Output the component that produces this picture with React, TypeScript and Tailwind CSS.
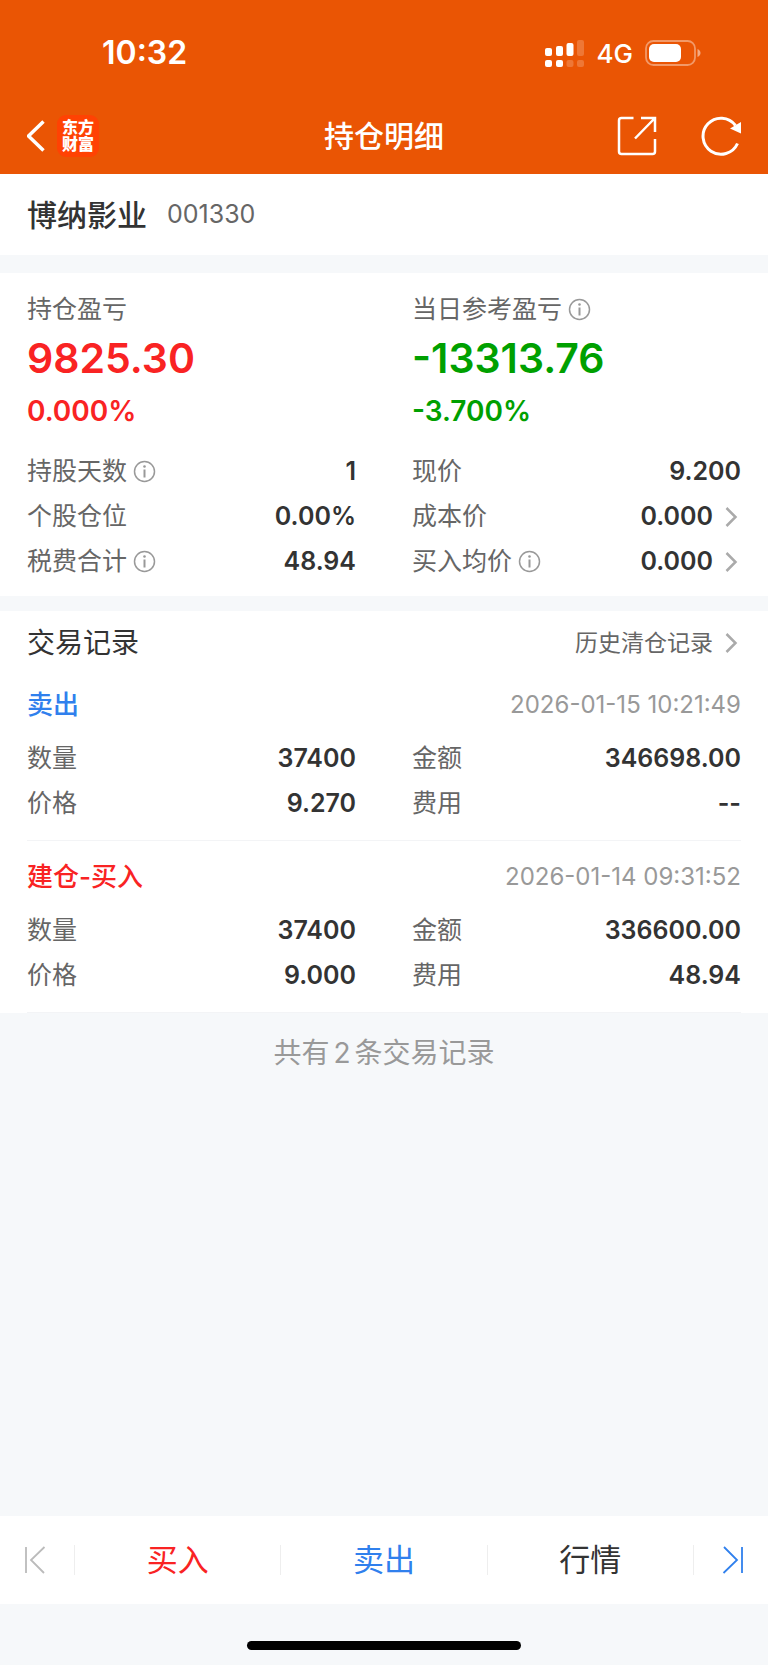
interface Field {
  label: string;
  value: string;
  info?: boolean;
  link?: boolean;
}

interface TradeRecord {
  title: string;
  side: 'buy' | 'sell';
  time: string;
  fields: Field[];
}

const position: Field[] = [
  { label: '持股天数', value: '1', info: true },
  { label: '现价', value: '9.200' },
  { label: '个股仓位', value: '0.00%' },
  { label: '成本价', value: '0.000', link: true },
  { label: '税费合计', value: '48.94', info: true },
  { label: '买入均价', value: '0.000', info: true, link: true },
];

const records: TradeRecord[] = [
  {
    title: '卖出',
    side: 'sell',
    time: '2026-01-15 10:21:49',
    fields: [
      { label: '数量', value: '37400' },
      { label: '金额', value: '346698.00' },
      { label: '价格', value: '9.270' },
      { label: '费用', value: '--' },
    ],
  },
  {
    title: '建仓-买入',
    side: 'buy',
    time: '2026-01-14 09:31:52',
    fields: [
      { label: '数量', value: '37400' },
      { label: '金额', value: '336600.00' },
      { label: '价格', value: '9.000' },
      { label: '费用', value: '48.94' },
    ],
  },
];

export default function App() {
  return (
    <div className="flex min-h-screen flex-col bg-[#f6f8fa] font-['Inter','Noto_Sans_CJK_SC',sans-serif] text-[#333]">
      <header className="bg-[#ea5504] pb-2 text-white">
        <StatusBar />
        <nav className="grid h-[60px] grid-cols-[1fr_auto_1fr] items-center px-[27px]">
          <div className="flex items-center gap-3">
            <button type="button" aria-label="返回">
              <svg className="h-8 w-[18px]" viewBox="0 0 18 32" fill="none" stroke="currentColor" strokeWidth="3.500">
                <path d="M16.500 1.500 1.500 16l15 14.500" />
              </svg>
            </button>
            <a href="#home" className="flex size-[42px] flex-col items-center justify-center rounded-[9px] bg-[#ff4203] text-base leading-[17px] font-black">
              <span>东方</span>
              <span>财富</span>
            </a>
          </div>
          <h1 className="text-3xl font-medium">持仓明细</h1>
          <div className="flex items-center justify-end gap-11">
            <button type="button" aria-label="分享">
              <svg className="size-10" viewBox="0 0 40 40" fill="none" stroke="currentColor" strokeWidth="2.500">
                <path d="M16.500 2H4.500A2.500 2.500 0 0 0 2 4.500v31A2.500 2.500 0 0 0 4.500 38h31a2.500 2.500 0 0 0 2.500-2.500V23" />
                <path d="M24 2h14v14M37.500 2.500 18 22.500" />
              </svg>
            </button>
            <button type="button" aria-label="刷新">
              <svg className="size-10" viewBox="0 0 40 40" fill="none" stroke="currentColor" strokeWidth="3">
                <path d="M36.500 27.500A18 18 0 1 1 34.500 9.500" />
                <path d="M40 6v11.500L29 12.500z" fill="currentColor" stroke="none" />
              </svg>
            </button>
          </div>
        </nav>
      </header>

      <main className="flex-1">
        <section className="flex items-center gap-5 bg-white px-[27px] py-5 leading-[41px]">
          <h2 className="text-3xl font-medium">博纳影业</h2>
          <span className="text-[25px] text-[#666]">001330</span>
        </section>

        {/* 持仓概览 */}
        <section className="mt-[18px] bg-white px-[27px] pt-[18px] pb-3">
          <div className="grid grid-cols-2 gap-x-14">
            <Profit label="持仓盈亏" value="9825.30" percent="0.000%" color="text-[#f92323]" />
            <Profit label="当日参考盈亏" value="-13313.76" percent="-3.700%" color="text-[#00a000]" info />
          </div>
          <div className="mt-4">
            <FieldGrid fields={position} />
          </div>
        </section>

        {/* 交易记录 */}
        <section className="mt-[15px] bg-white px-[27px] pt-1.5">
          <div className="flex items-center justify-between leading-[52px]">
            <h2 className="text-[28px]">交易记录</h2>
            <a href="#history" className="flex items-center gap-3 text-[23px] text-[#666]">
              历史清仓记录
              <Chevron />
            </a>
          </div>
          {records.map(record => (
            <RecordItem key={record.time} record={record} />
          ))}
        </section>

        <p className="text-center text-[28px] leading-[80px] text-[#999]">
          共有<span className="mx-1">{records.length}</span>条交易记录
        </p>
      </main>

      <footer>
        <div className="flex h-[88px] items-center bg-white text-[31px]">
          <button type="button" aria-label="上一只" className="flex w-[74px] justify-center text-[#bbb]">
            <StepIcon />
          </button>
          <button type="button" className="h-[30px] flex-1 border-l border-[#eee] leading-[30px] text-[#f92323]">买入</button>
          <button type="button" className="h-[30px] flex-1 border-l border-[#eee] leading-[30px] text-[#3080ed]">卖出</button>
          <button type="button" className="h-[30px] flex-1 border-x border-[#eee] leading-[30px]">行情</button>
          <button type="button" aria-label="下一只" className="flex w-[74px] rotate-180 justify-center text-[#3080ed]">
            <StepIcon />
          </button>
        </div>
        <div className="flex justify-center pt-[37px] pb-[15px]">
          <div className="h-[9px] w-[274px] rounded-full bg-black"></div>
        </div>
      </footer>
    </div>
  );
}

function StatusBar() {
  return (
    <div className="flex h-[106px] items-center justify-between pr-[67px] pl-[102px]">
      <span className="text-[32px] font-semibold">10:32</span>
      <div className="flex items-center gap-3">
        <svg className="h-[27px] w-10" viewBox="0 0 40 27" fill="currentColor">
          <rect x="0" y="8" width="7" height="8" rx="2" />
          <rect x="11" y="6" width="7" height="10" rx="2" />
          <rect x="21.500" y="3" width="7" height="13" rx="2" />
          <rect x="32" y="0" width="7" height="16" rx="2" opacity="0.2" />
          <rect x="0" y="20" width="7" height="7" rx="2" />
          <rect x="11" y="20" width="7" height="7" rx="2" />
          <rect x="21.500" y="20" width="7" height="7" rx="2" opacity="0.2" />
          <rect x="32" y="20" width="7" height="7" rx="2" opacity="0.2" />
        </svg>
        <span className="text-[26px] font-medium">4G</span>
        <svg className="h-[26px] w-14" viewBox="0 0 56 26" fill="none">
          <rect x="1" y="1" width="49" height="24" rx="7.500" stroke="currentColor" strokeWidth="1.800" opacity="0.4" />
          <rect x="4" y="4" width="32" height="18" rx="5" fill="currentColor" />
          <path d="M52.500 9c4 1.500 4 6.500 0 8z" fill="currentColor" opacity="0.5" />
        </svg>
      </div>
    </div>
  );
}

function Profit({ label, value, percent, color, info }: { label: string; value: string; percent: string; color: string; info?: boolean }) {
  return (
    <div>
      <p className="flex items-center gap-1.5 text-[25px] leading-9 text-[#666]">
        {label}
        {info && <InfoButton label={label} />}
      </p>
      <p className={`text-[41px] leading-[62px] font-semibold ${color}`}>{value}</p>
      <p className={`text-[28px] leading-[44px] font-semibold ${color}`}>{percent}</p>
    </div>
  );
}

function FieldGrid({ fields }: { fields: Field[] }) {
  return (
    <dl className="grid grid-cols-2 gap-x-14 text-[25px] leading-[45px]">
      {fields.map(field => (
        <div key={field.label} className="flex items-center justify-between">
          <dt className="flex items-center gap-1.5 text-[#666]">
            {field.label}
            {field.info && <InfoButton label={field.label} />}
          </dt>
          <dd className="flex items-center gap-3 font-semibold">
            {field.value}
            {field.link && <Chevron />}
          </dd>
        </div>
      ))}
    </dl>
  );
}

function RecordItem({ record }: { record: TradeRecord }) {
  return (
    <article className="border-b border-[#f3f4f6] pt-[5px] pb-3.5">
      <div className="flex items-center justify-between leading-[62px]">
        <h3 className={`text-[26px] font-medium ${record.side === 'buy' ? 'text-[#f92323]' : 'text-[#3080ed]'}`}>{record.title}</h3>
        <time className="text-2xl leading-[62px] text-[#999]">{record.time}</time>
      </div>
      <FieldGrid fields={record.fields} />
    </article>
  );
}

function InfoButton({ label }: { label: string }) {
  return (
    <button type="button" aria-label={`${label}说明`}>
      <svg className="size-[23px]" viewBox="0 0 23 23" fill="none" stroke="#999" strokeWidth="1.500">
        <circle cx="11.500" cy="11.500" r="10" />
        <path d="M11.500 9.500v8" strokeWidth="2" />
        <circle cx="11.500" cy="6.500" r="1.300" fill="#999" stroke="none" />
      </svg>
    </button>
  );
}

function Chevron() {
  return (
    <svg className="h-5 w-4" viewBox="0 0 16 20" fill="none" stroke="#aaa" strokeWidth="2.500">
      <path d="m1.500 1 9 9-9 9" />
    </svg>
  );
}

function StepIcon() {
  return (
    <svg className="h-7 w-6" viewBox="0 0 24 28" fill="none" stroke="currentColor" strokeWidth="1.800">
      <path d="M1 1v26M19.500 1 6 14l13 13" />
    </svg>
  );
}
